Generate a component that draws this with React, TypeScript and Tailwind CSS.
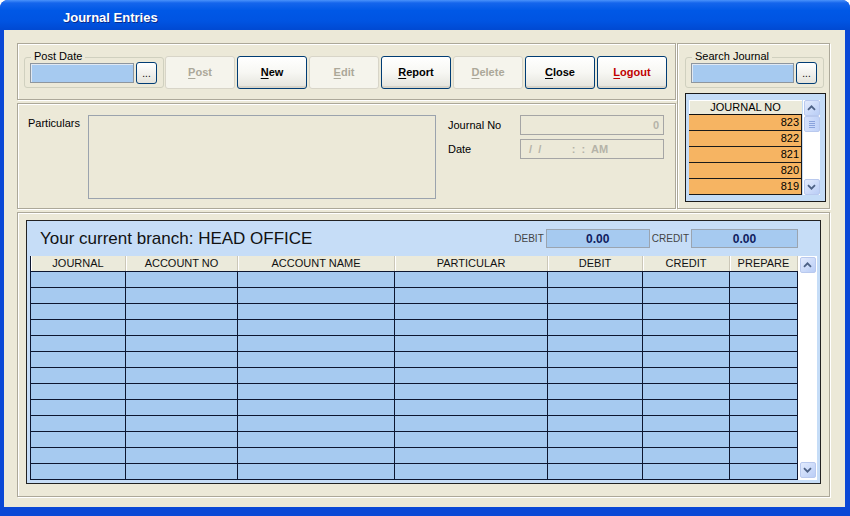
import React from "react";

const etched = "border border-[#aca899] shadow-[inset_1px_1px_0_#ffffff,1px_1px_0_#ffffff]";

function Chevron({ down }: { down?: boolean }) {
  return (
    <svg width="9" height="6" viewBox="0 0 9 6">
      <path
        d={down ? "M1 1.2 L4.5 4.7 L8 1.2" : "M1 4.8 L4.5 1.3 L8 4.8"}
        fill="none"
        stroke="#4d6185"
        strokeWidth="1.8"
      />
    </svg>
  );
}

function ScrollBtn({ down }: { down?: boolean }) {
  return (
    <div className="w-[16px] h-[16px] rounded-[2px] border border-[#b9c9ee] bg-linear-to-br from-[#e3ebfd] to-[#b9cdf6] flex items-center justify-center">
      <Chevron down={down} />
    </div>
  );
}

function Btn({ text, enabled, red }: { text: string; enabled?: boolean; red?: boolean }) {
  const first = text[0];
  const rest = text.slice(1);
  if (!enabled) {
    return (
      <div className="w-[70px] h-[33px] rounded-[3px] border border-[#d8d5c8] bg-[#f5f4ec] flex items-center justify-center text-[11px] font-bold text-[#aca899]">
        <span>
          <span className="underline underline-offset-[2px]">{first}</span>
          {rest}
        </span>
      </div>
    );
  }
  return (
    <div className="w-[70px] h-[33px] rounded-[3px] border border-[#003c74] bg-linear-to-b from-[#ffffff] via-[#f7f7f3] to-[#e4e3dc] shadow-[inset_0_-2px_0_#d8d4c9] flex items-center justify-center text-[11px] font-bold">
      <span className={red ? "text-[#c00000]" : "text-black"}>
        <span className="underline underline-offset-[2px]">{first}</span>
        {rest}
      </span>
    </div>
  );
}

function DotBtn() {
  return (
    <div className="w-[21px] h-[22px] rounded-[3px] border border-[#003c74] bg-linear-to-b from-[#ffffff] to-[#e4e3dc] flex items-end justify-center pb-[4px] text-[10px] leading-[10px] text-black">
      ...
    </div>
  );
}

function GroupBox({ label, width }: { label: string; width: string }) {
  return (
    <div className={`relative ${width} h-[31px] border border-[#d0d0bf] rounded-[3px] flex items-center pl-[5px] gap-[2px]`}>
      <div className="absolute left-[6px] top-[-8px] bg-[#ece9d8] px-[3px] text-[11px] leading-[13px] text-black">
        {label}
      </div>
      <div className="h-[20px] flex-1 mr-0 bg-[#a6caf0] border border-[#8e969e] shadow-[inset_1px_1px_0_#e0e8f2]" />
      <DotBtn />
      <div className="w-[4px]" />
    </div>
  );
}

const cols = [
  { name: "JOURNAL", w: "w-[95px]" },
  { name: "ACCOUNT NO", w: "w-[112px]" },
  { name: "ACCOUNT NAME", w: "w-[157px]" },
  { name: "PARTICULAR", w: "w-[153px]" },
  { name: "DEBIT", w: "w-[95px]" },
  { name: "CREDIT", w: "w-[87px]" },
  { name: "PREPARE", w: "w-[68px]" },
];

export default function App() {
  const rows = Array.from({ length: 13 });
  const journals = ["823", "822", "821", "820", "819"];
  return (
    <div className="w-[850px] h-[516px] bg-white font-['Liberation_Sans',Arial,sans-serif] text-black overflow-hidden">
      <div className="w-[850px] h-[516px] rounded-t-[8px] bg-[#0a48d6] flex flex-col">
        {/* Title bar */}
        <div className="h-[30px] rounded-t-[8px] bg-[linear-gradient(to_bottom,#4a92fb_0%,#1565ec_10%,#0058e6_35%,#0054e2_70%,#0049d2_100%)] flex items-center pl-[63px] pt-[5px]">
          <span className="text-white font-bold text-[13px] [text-shadow:1px_1px_0_#0a2a8a]">Journal Entries</span>
        </div>
        {/* Body */}
        <div className="flex-1 ml-[4px] mr-[5px] mb-[9px] bg-[#ece9d8] pt-[13px] pl-[13px] flex flex-col gap-[3px]">
          <div className="flex h-[166px]">
            {/* Left column */}
            <div className="w-[659px] flex flex-col gap-[3px]">
              {/* Top panel */}
              <div className={`${etched} h-[57px] flex items-start pl-[6px]`}>
                <div className="mt-[13px]">
                  <GroupBox label="Post Date" width="w-[140px]" />
                </div>
                <div className="ml-[1px] mt-[12px] flex gap-[2px]">
                  <Btn text="Post" />
                  <Btn text="New" enabled />
                  <Btn text="Edit" />
                  <Btn text="Report" enabled />
                  <Btn text="Delete" />
                  <Btn text="Close" enabled />
                  <Btn text="Logout" enabled red />
                </div>
              </div>
              {/* Particulars panel */}
              <div className={`${etched} h-[106px] flex items-start pt-[11px] pl-[10px]`}>
                <div className="w-[60px] text-[11px] leading-[13px] pt-[2px]">Particulars</div>
                <div className="w-[348px] h-[84px] border border-[#9ba3ad]" />
                <div className="ml-[12px] flex flex-col gap-[4px]">
                  <div className="flex items-center h-[20px]">
                    <div className="w-[72px] text-[11px]">Journal No</div>
                    <div className="w-[144px] h-[20px] border border-[#a5a5a5] flex items-center justify-end pr-[4px] text-[11px] font-bold text-[#b5b3a8]">
                      0
                    </div>
                  </div>
                  <div className="flex items-center h-[20px]">
                    <div className="w-[72px] text-[11px]">Date</div>
                    <div className="w-[144px] h-[20px] border border-[#a5a5a5] flex items-center pl-[5px] text-[11px] font-bold text-[#b5b3a8] whitespace-pre">
                      {" /  /          :  :  AM"}
                    </div>
                  </div>
                </div>
              </div>
            </div>
            {/* Right column */}
            <div className={`${etched} ml-[1px] w-[153px] h-[166px] flex flex-col pl-[7px]`}>
              <div className="mt-[13px]">
                <GroupBox label="Search Journal" width="w-[139px]" />
              </div>
              <div className="mt-[5px] w-[141px] h-[109px] border border-[#1a1a1a] bg-[#c4dcf7] pt-[6px] pl-[3px]">
                <div className="flex">
                  <div className="w-[113px] flex flex-col">
                    <div className="h-[15px] bg-[#ebeadb] border-b border-[#111] flex items-center justify-center text-[11px] leading-[11px] shadow-[inset_1px_1px_0_#fff]">
                      JOURNAL NO
                    </div>
                    {journals.map((j) => (
                      <div
                        key={j}
                        className="h-[16px] bg-[#f6b462] border-b border-r border-[#1a1a1a] flex items-center justify-end pr-[2px] text-[11px] leading-[11px]"
                      >
                        {j}
                      </div>
                    ))}
                  </div>
                  <div className="w-[17px] h-[95px] bg-white flex flex-col items-center justify-between py-0 ml-[1px]">
                    <div className="flex flex-col gap-0">
                      <ScrollBtn />
                      <div className="w-[16px] h-[16px] rounded-[2px] border border-[#b9c9ee] bg-linear-to-r from-[#d5e1fc] to-[#c0d2f8] flex flex-col items-center justify-center gap-[1px]">
                        <div className="w-[6px] h-[1px] bg-[#8aa3dc]" />
                        <div className="w-[6px] h-[1px] bg-[#8aa3dc]" />
                        <div className="w-[6px] h-[1px] bg-[#8aa3dc]" />
                        <div className="w-[6px] h-[1px] bg-[#8aa3dc]" />
                      </div>
                    </div>
                    <ScrollBtn down />
                  </div>
                </div>
              </div>
            </div>
          </div>
          {/* Bottom panel */}
          <div className={`${etched} w-[813px] h-[285px] pt-[7px] pl-[8px]`}>
            <div className="w-[795px] h-[264px] border border-[#222] bg-[#c6ddf7] flex flex-col">
              <div className="h-[35px] flex items-center pl-[13px]">
                <div className="text-[17px] leading-[20px] text-[#111] pt-[1px]">Your current branch: HEAD OFFICE</div>
                <div className="ml-auto flex items-center mr-[22px]">
                  <span className="text-[10px] text-[#444] mr-[2px]">DEBIT</span>
                  <div className="w-[104px] h-[19px] bg-[#a6caf0] border border-[#9aa4b0] flex items-center justify-center text-[12px] font-bold text-[#102060]">
                    0.00
                  </div>
                  <span className="text-[10px] text-[#444] ml-[2px] mr-[2px]">CREDIT</span>
                  <div className="w-[107px] h-[19px] bg-[#a6caf0] border border-[#9aa4b0] flex items-center justify-center text-[12px] font-bold text-[#102060]">
                    0.00
                  </div>
                </div>
              </div>
              <div className="flex ml-[3px]">
                <div className="w-[768px] flex flex-col border-l border-[#0c1630]">
                  <div className="h-[15px] flex bg-[#ebeadb]">
                    {cols.map((c) => (
                      <div
                        key={c.name}
                        className={`${c.w} h-[15px] flex items-center justify-center text-[11px] leading-[11px] text-[#111] border-r border-[#cbc7b8] shadow-[inset_1px_0_0_#fff]`}
                      >
                        {c.name}
                      </div>
                    ))}
                  </div>
                  <div className="border-t border-[#0c1630]">
                    {rows.map((_, i) => (
                      <div key={i} className="flex h-[16px] border-b border-[#0c1630]">
                        {cols.map((c) => (
                          <div key={c.name} className={`${c.w} h-[15px] bg-[#a6caf0] border-r border-[#0c1630]`} />
                        ))}
                      </div>
                    ))}
                  </div>
                </div>
                <div className="w-[19px] h-[224px] bg-white flex flex-col items-center justify-between pt-[1px] pb-[2px]">
                  <ScrollBtn />
                  <ScrollBtn down />
                </div>
              </div>
            </div>
          </div>
        </div>
      </div>
    </div>
  );
}
